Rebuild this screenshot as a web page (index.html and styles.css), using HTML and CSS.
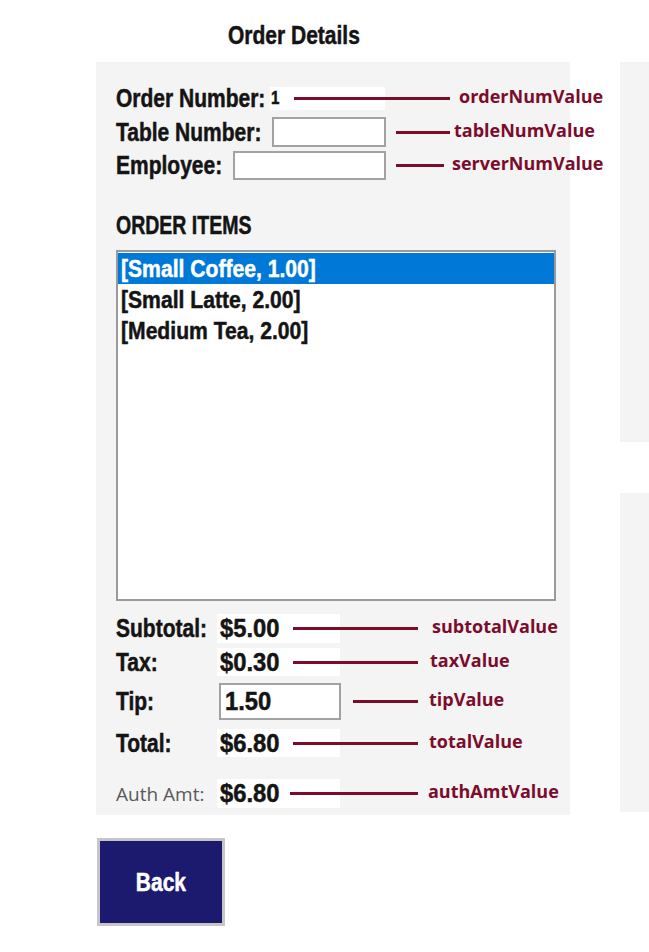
FILE: index.html
```html
<!DOCTYPE html>
<html>
<head>
<meta charset="utf-8">
<link rel="stylesheet" href="styles.css">
</head>
<body>
<div class="title"><span class="c">Order Details</span></div>
<div class="main">
  <div class="panel">
    <div class="row row-a">
      <span class="lbl w-on"><span class="c">Order Number:</span></span>
      <span class="hl hl-on"><span class="small c">1</span></span>
      <span class="line l-on"></span>
      <span class="note n-on">orderNumValue</span>
    </div>
    <div class="row row-b">
      <span class="lbl w-tn"><span class="c">Table Number:</span></span>
      <span class="inp inp-tn"></span>
      <span class="line l-tn"></span>
      <span class="note n-tn">tableNumValue</span>
    </div>
    <div class="row row-c">
      <span class="lbl w-em"><span class="c">Employee:</span></span>
      <span class="inp inp-em"></span>
      <span class="line l-em"></span>
      <span class="note n-em">serverNumValue</span>
    </div>
    <div class="hdr"><span class="c ch">ORDER ITEMS</span></div>
    <div class="listbox">
      <div class="item sel"><span class="c ci">[Small Coffee, 1.00]</span></div>
      <div class="item"><span class="c ci">[Small Latte, 2.00]</span></div>
      <div class="item"><span class="c ci">[Medium Tea, 2.00]</span></div>
    </div>
    <div class="row r-sub">
      <span class="lbl w-sum"><span class="c">Subtotal:</span></span>
      <span class="hl hl-val"><span class="c v">$5.00</span></span>
      <span class="line l-val"></span>
      <span class="note n-sub">subtotalValue</span>
    </div>
    <div class="row r-tax">
      <span class="lbl w-sum"><span class="c">Tax:</span></span>
      <span class="hl hl-val"><span class="c v">$0.30</span></span>
      <span class="line l-val"></span>
      <span class="note n-tax">taxValue</span>
    </div>
    <div class="row r-tip">
      <span class="lbl w-tip"><span class="c">Tip:</span></span>
      <span class="inp inp-tip"><span class="c v">1.50</span></span>
      <span class="line l-tip"></span>
      <span class="note n-tip">tipValue</span>
    </div>
    <div class="row r-tot">
      <span class="lbl w-sum"><span class="c">Total:</span></span>
      <span class="hl hl-val"><span class="c v">$6.80</span></span>
      <span class="line l-val"></span>
      <span class="note n-tot">totalValue</span>
    </div>
    <div class="row r-auth">
      <span class="lbl w-sum auth">Auth Amt:</span>
      <span class="hl hl-auth"><span class="c v">$6.80</span></span>
      <span class="line l-auth"></span>
      <span class="note n-auth">authAmtValue</span>
    </div>
  </div>
  <div class="strip">
    <div class="strip-a"></div>
    <div class="strip-b"></div>
  </div>
</div>
<div class="btn-wrap"><div class="btn"><span class="c cc">Back</span></div></div>
</body>
</html>
```
FILE: styles.css
```css
html, body {
  margin: 0;
  padding: 0;
  background: #ffffff;
}
body {
  width: 649px;
  height: 952px;
  overflow: hidden;
  font-family: "Liberation Sans", Arial, sans-serif;
  font-weight: bold;
  color: #141414;
}
.c {
  display: inline-block;
  transform: scaleX(0.84);
  transform-origin: 0 50%;
  white-space: nowrap;
  -webkit-text-stroke: 0.5px currentColor;
}
.c.v { transform: scaleX(0.95); }
.c.ch { transform: scaleX(0.78); }
.c.ci { transform: scaleX(0.88); }
.c.cc { transform-origin: 50% 50%; }
.title {
  padding: 20px 0 12px 228px;
  height: 30px;
  line-height: 30px;
  font-size: 25px;
}
.main {
  display: flex;
  gap: 50px;
}
.panel {
  margin-left: 96px;
  width: 454px;
  height: 730px;
  padding: 23px 0 0 20px;
  background: #f4f4f4;
}
.strip {
  display: flex;
  flex-direction: column;
  gap: 51px;
  width: 29px;
}
.strip-a { height: 380px; background: #f4f4f4; }
.strip-b { height: 319px; background: #f4f4f4; }

.row {
  display: flex;
  align-items: center;
  font-size: 25px;
  white-space: nowrap;
}
.lbl { flex: none; }
.hl {
  flex: none;
  display: flex;
  align-items: center;
  background: #ffffff;
  box-sizing: border-box;
}
.line {
  flex: none;
  height: 3px;
  background: #7b0c2c;
}
.note {
  font-family: "Open Sans", sans-serif;
  font-weight: bold;
  font-size: 18px;
  color: #7b0c2c;
  margin-bottom: 5px;
}
.inp {
  flex: none;
  box-sizing: border-box;
  background: #ffffff;
  border: 2px solid #a2a2a2;
}

.row-a { height: 27px; }
.w-on { width: 154px; }
.hl-on { width: 115px; height: 23px; padding-left: 1px; margin-right: -91px; }
.small { font-size: 18px; }
.l-on { width: 156px; margin-right: 9px; }

.row-b { height: 30px; margin-top: 5px; }
.w-tn { width: 156px; }
.inp-tn { width: 114px; height: 30px; margin-right: 10px; }
.l-tn { width: 54px; margin-right: 4px; }

.row-c { height: 29px; margin-top: 4px; }
.w-em { width: 117px; }
.inp-em { width: 153px; height: 29px; margin-right: 10px; }
.l-em { width: 48px; margin-right: 8px; }

.hdr {
  margin-top: 30px;
  height: 30px;
  line-height: 30px;
  font-size: 25px;
}
.listbox {
  margin-top: 10px;
  width: 440px;
  height: 351px;
  box-sizing: border-box;
  border: 2px solid #9a9a9a;
  padding-top: 1px;
  background: #ffffff;
}
.item {
  height: 31px;
  line-height: 31px;
  padding-left: 3px;
  font-size: 24px;
}
.item.sel {
  background: #0078d7;
  color: #ffffff;
}

.r-sub { height: 29px; margin-top: 13px; }
.r-tax { height: 28px; margin-top: 5px; }
.r-tip { height: 37px; margin-top: 7px; }
.r-tot { height: 28px; margin-top: 9px; }
.r-auth { height: 29px; margin-top: 22px; }

.w-sum { width: 101px; }
.w-tip { width: 103px; }
.hl-val { width: 123px; height: 100%; padding-left: 3px; margin-right: -47px; }
.l-val { width: 125px; }
.n-sub { margin-left: 14px; }
.n-tax { margin-left: 12px; }
.n-tot { margin-left: 11px; }

.inp-tip {
  width: 122px;
  height: 37px;
  padding-left: 4px;
  display: flex;
  align-items: center;
  margin-right: 12px;
}
.l-tip { width: 65px; margin-right: 11px; }

.auth {
  font-family: "Open Sans", sans-serif;
  font-weight: normal;
  font-size: 19px;
  color: #5a5a5a;
}
.hl-auth { width: 123px; height: 100%; padding-left: 3px; margin-right: -50px; }
.l-auth { width: 128px; margin-right: 10px; }

.btn-wrap {
  padding: 23px 0 0 97px;
}
.btn {
  width: 128px;
  height: 88px;
  box-sizing: border-box;
  border: 3px solid #c6c6c6;
  background: #1b1a6f;
  color: #ffffff;
  font-size: 25px;
  display: flex;
  align-items: center;
  justify-content: center;
}
```
